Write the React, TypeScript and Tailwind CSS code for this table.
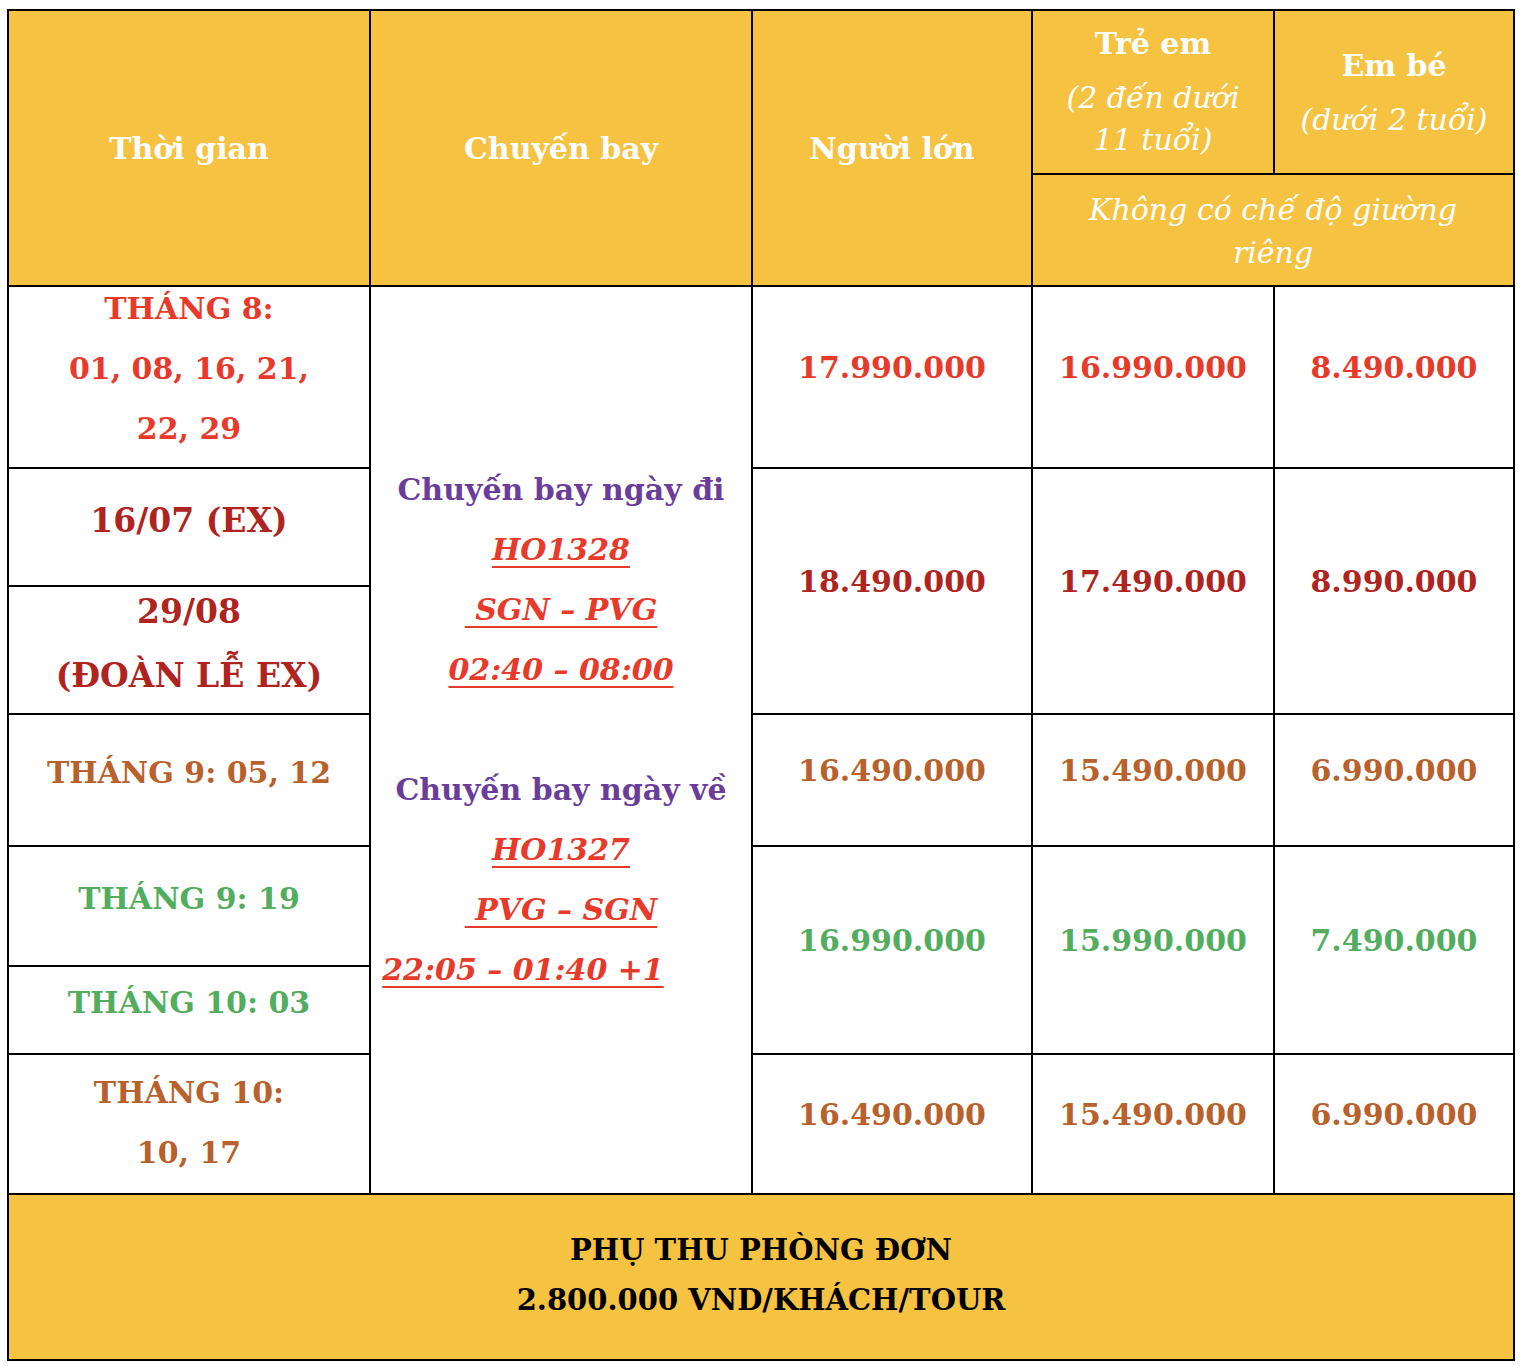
import React from 'react';

const font = { fontFamily: '"DejaVu Serif", "Liberation Serif", serif' };

const cell = 'border-r-2 border-b-2 border-black flex flex-col items-center justify-center text-center';
const head = 'bg-[#F5C242] text-white';

const Price = ({ value, color }: { value: string; color: string }) => (
  <div className={`${cell} font-bold text-[30px] pb-[20px] ${color}`}>{value}</div>
);

const App = () => {
  return (
    <div className="w-[1520px] h-[1366px] bg-white pt-[9px] pl-[7px]" style={font}>
      <div
        className="grid border-l-2 border-t-2 border-black w-[1508px]"
        style={{
          gridTemplateColumns: '362px 382px 280px 242px 240px',
          gridTemplateRows: '164px 112px 182px 118px 128px 132px 120px 88px 140px 166px',
        }}
      >
        {/* header */}
        <div className={`${cell} ${head} row-span-2 font-bold text-[30px]`}>Thời gian</div>
        <div className={`${cell} ${head} row-span-2 font-bold text-[30px]`}>Chuyến bay</div>
        <div className={`${cell} ${head} row-span-2 font-bold text-[30px]`}>Người lớn</div>
        <div className={`${cell} ${head} justify-start`}>
          <div className="font-bold text-[30px] leading-[66px]">Trẻ em</div>
          <div className="italic text-[30px] leading-[42px] px-[18px]">(2 đến dưới 11 tuổi)</div>
        </div>
        <div className={`${cell} ${head} justify-start pt-[30px]`}>
          <div className="font-bold text-[30px] leading-[50px]">Em bé</div>
          <div className="italic text-[30px] leading-[58px]">(dưới 2 tuổi)</div>
        </div>
        <div className={`${cell} ${head} col-span-2 italic text-[30px] leading-[43px] px-[40px] pt-[2px]`}>
          Không có chế độ giường riêng
        </div>

        {/* row A */}
        <div className={`${cell} font-bold text-[30px] leading-[60px] text-[#E83A2B] px-[50px] pb-[16px]`}>
          <div>THÁNG 8:</div>
          <div>01, 08, 16, 21,</div>
          <div>22, 29</div>
        </div>
        <div className={`${cell} row-span-7 font-bold text-[30px] leading-[60px] pb-[20px]`}>
          <div className="text-[#6A3D9A]">Chuyến bay ngày đi</div>
          <div className="text-[#E83A2B] italic underline underline-offset-[6px] decoration-2">HO1328</div>
          <div className="text-[#E83A2B] italic underline underline-offset-[6px] decoration-2">{'\u00a0SGN – PVG'}</div>
          <div className="text-[#E83A2B] italic underline underline-offset-[6px] decoration-2">02:40 – 08:00</div>
          <div className="h-[60px]" />
          <div className="text-[#6A3D9A]">Chuyến bay ngày về</div>
          <div className="text-[#E83A2B] italic underline underline-offset-[6px] decoration-2">HO1327</div>
          <div className="text-[#E83A2B] italic underline underline-offset-[6px] decoration-2">{'\u00a0PVG – SGN'}</div>
          <div className="mr-[76px] text-[#E83A2B] italic underline underline-offset-[6px] decoration-2">22:05 – 01:40 +1</div>
        </div>
        <Price value="17.990.000" color="text-[#E83A2B]" />
        <Price value="16.990.000" color="text-[#E83A2B]" />
        <Price value="8.490.000" color="text-[#E83A2B]" />

        {/* row B */}
        <div className={`${cell} font-bold text-[33px] text-[#B0241F] pb-[12px]`}>16/07 (EX)</div>
        <Price value="18.490.000" color="row-span-2 text-[#B0241F]" />
        <Price value="17.490.000" color="row-span-2 text-[#B0241F]" />
        <Price value="8.990.000" color="row-span-2 text-[#B0241F]" />
        <div className={`${cell} font-bold text-[33px] leading-[64px] text-[#B0241F] pb-[12px]`}>
          <div>29/08</div>
          <div>(ĐOÀN LỄ EX)</div>
        </div>

        {/* row C */}
        <div className={`${cell} font-bold text-[30px] text-[#B8612C] pb-[16px]`}>THÁNG 9: 05, 12</div>
        <Price value="16.490.000" color="text-[#B8612C]" />
        <Price value="15.490.000" color="text-[#B8612C]" />
        <Price value="6.990.000" color="text-[#B8612C]" />

        {/* row D */}
        <div className={`${cell} font-bold text-[30px] text-[#52AD5E] pb-[16px]`}>THÁNG 9: 19</div>
        <Price value="16.990.000" color="row-span-2 text-[#52AD5E]" />
        <Price value="15.990.000" color="row-span-2 text-[#52AD5E]" />
        <Price value="7.490.000" color="row-span-2 text-[#52AD5E]" />
        <div className={`${cell} font-bold text-[30px] text-[#52AD5E] pb-[16px]`}>THÁNG 10: 03</div>

        {/* row E */}
        <div className={`${cell} font-bold text-[30px] leading-[60px] text-[#B8612C] pb-[2px]`}>
          <div>THÁNG 10:</div>
          <div>10, 17</div>
        </div>
        <Price value="16.490.000" color="text-[#B8612C]" />
        <Price value="15.490.000" color="text-[#B8612C]" />
        <Price value="6.990.000" color="text-[#B8612C]" />

        {/* footer */}
        <div className={`${cell} col-span-5 bg-[#F5C242] text-black font-bold text-[29px] leading-[50px] pb-[4px]`}>
          <div>PHỤ THU PHÒNG ĐƠN</div>
          <div>2.800.000 VND/KHÁCH/TOUR</div>
        </div>
      </div>
    </div>
  );
};

export default App;
